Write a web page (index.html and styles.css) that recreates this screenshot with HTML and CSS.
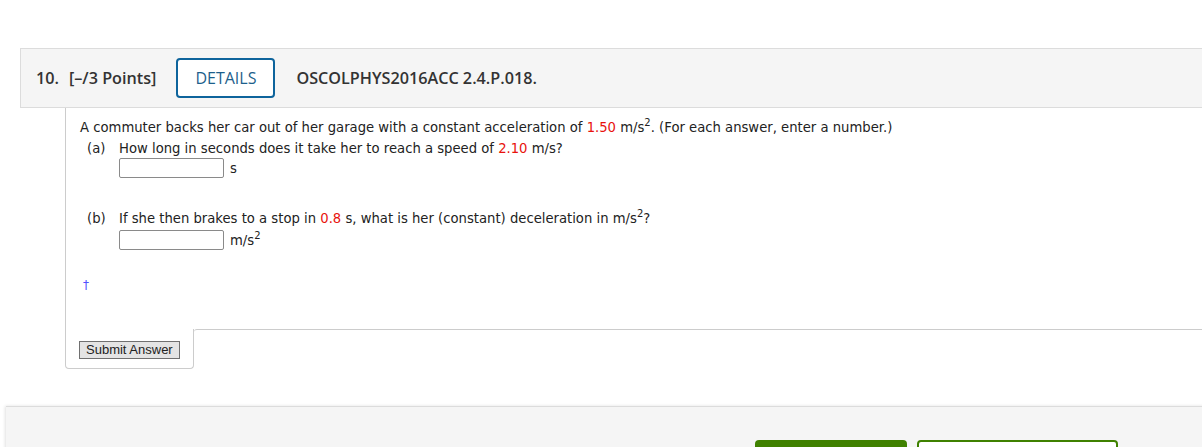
FILE: index.html
```html
<!DOCTYPE html>
<html>
<head>
    <title>Question 10</title>
    <link rel="stylesheet" href="styles.css">
</head>
<body>
    <div class="page">
        <div class="q-header">
            <span class="q-num">10.</span>
            <span class="q-points">[&ndash;/3 Points]</span>
            <button class="details-btn">DETAILS</button>
            <span class="q-code">OSCOLPHYS2016ACC 2.4.P.018.</span>
        </div>

        <div class="q-body">
            <p class="intro">A commuter backs her car out of her garage with a constant acceleration of <span class="num">1.50</span> m/s<sup>2</sup>. (For each answer, enter a number.)</p>

            <div class="part part-a">
                <span class="part-label">(a)</span>
                <span>How long in seconds does it take her to reach a speed of <span class="num">2.10</span> m/s?</span>
            </div>
            <div class="answer-row row-a">
                <input type="text" class="answer-box">
                <span class="unit">s</span>
            </div>

            <div class="part part-b">
                <span class="part-label">(b)</span>
                <span>If she then brakes to a stop in <span class="num">0.8</span> s, what is her (constant) deceleration in m/s<sup>2</sup>?</span>
            </div>
            <div class="answer-row row-b">
                <input type="text" class="answer-box">
                <span class="unit">m/s<sup>2</sup></span>
            </div>

            <div class="dagger">&dagger;</div>
        </div>

        <div class="submit-row">
            <div class="submit-cell">
                <button class="submit-btn">Submit Answer</button>
            </div>
            <div class="submit-fill"></div>
        </div>
    </div>

    <div class="footer-bar">
        <button class="btn-green">&nbsp;</button>
        <button class="btn-outline">&nbsp;</button>
    </div>
</body>
</html>
```

FILE: styles.css
```css
body {
    margin: 0;
    background-color: #fff;
    overflow: hidden;
    width: 1202px;
    height: 447px;
    font-family: "DejaVu Sans", Verdana, sans-serif;
    color: #333;
}
.page {
    padding-top: 48px;
    padding-left: 20px;
    width: 1240px;
}
.q-header {
    display: flex;
    align-items: center;
    height: 58px;
    background-color: #f5f5f5;
    border: 1px solid #dcdcdc;
    border-right: none;
    padding-left: 15px;
    font-family: "Open Sans", sans-serif;
    font-weight: 600;
    font-size: 16.2px;
    color: #333;
}
.q-num {
    margin-right: 10px;
}
.q-points {
    margin-right: 20px;
}
.details-btn {
    font-family: "Open Sans", sans-serif;
    font-size: 16px;
    font-weight: 400;
    color: #1d5f8c;
    background-color: #fff;
    border: 2px solid #0e649c;
    border-radius: 4px;
    width: 99px;
    height: 40px;
    padding: 0;
    margin-right: 21px;
}
.q-code {
    color: #333;
}
.q-body {
    margin-left: 45px;
    border-left: 1px solid #ccc;
    padding: 10px 0 34px 14px;
    font-size: 13.2px;
    color: #222;
}
.q-body p {
    margin: 0;
}
.intro {
    line-height: 20px;
}
sup {
    font-size: 10px;
    line-height: 0;
    vertical-align: 6px;
}
.num {
    color: #e8120c;
}
.part {
    display: flex;
    line-height: 20px;
    margin-left: 7px;
}
.part-label {
    width: 32px;
}
.part-a {
    margin-top: 1px;
}
.part-b {
    margin-top: 31px;
}
.answer-row {
    display: flex;
    align-items: center;
    margin-left: 39px;
    height: 20px;
}
.row-a {
    margin-top: -1px;
}
.row-b {
    margin-top: 1px;
}
.answer-box {
    width: 105px;
    height: 20px;
    box-sizing: border-box;
    border: 1px solid #8a8a8a;
    border-radius: 2px;
    margin: 0 6px 0 0;
    padding: 0;
}
.unit {
    color: #222;
}
.dagger {
    margin-top: 25px;
    margin-left: 3px;
    color: #5050ff;
    line-height: 20px;
    font-size: 12px;
}
.submit-row {
    display: flex;
    margin-left: 45px;
}
.submit-cell {
    width: 114px;
    padding: 12px 0 9px 13px;
    border: 1px solid #ccc;
    border-top: none;
    border-radius: 0 0 4px 4px;
}
.submit-fill {
    flex: 1;
    border-top: 1px solid #ccc;
    border-top-left-radius: 3px;
}
.submit-btn {
    display: block;
    font-family: "Liberation Sans", Arial, sans-serif;
    font-size: 13px;
    color: #222;
    background-color: #e4e4e4;
    border: 1px solid #707070;
    height: 18px;
    padding: 0 6px;
    line-height: 14px;
}
.footer-bar {
    margin: 37px 0 0 6px;
    width: 1240px;
    height: 80px;
    background-color: #f5f5f5;
    border-top: 1px solid #dcdcdc;
    box-shadow: -1px 0 3px rgba(0, 0, 0, 0.12);
    display: flex;
    padding: 33px 0 0 749px;
    gap: 10px;
}
.btn-green {
    width: 152px;
    height: 40px;
    background-color: #3f8100;
    border: none;
    border-radius: 4px;
}
.btn-outline {
    width: 201px;
    height: 40px;
    background-color: #fff;
    border: 2px solid #3f8100;
    border-radius: 4px;
}
```
